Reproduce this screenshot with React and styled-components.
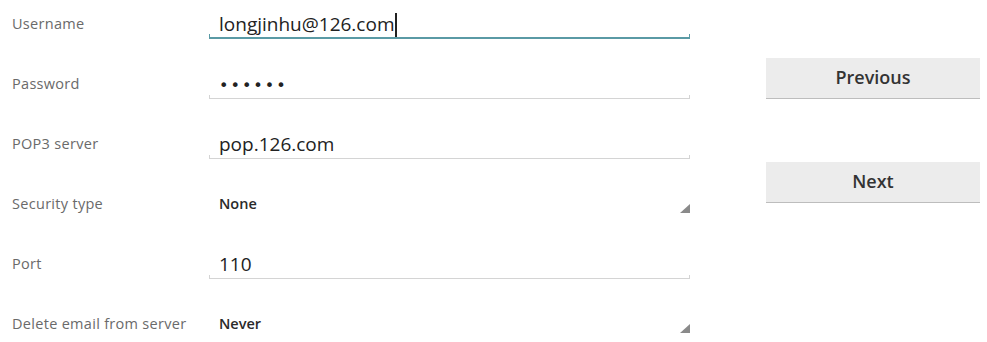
import React from "react";
import styled, { createGlobalStyle } from "styled-components";

const Global = createGlobalStyle`
  html, body { margin: 0; padding: 0; background: #fff; }
  body { font-family: "Open Sans", "Roboto", sans-serif; -webkit-font-smoothing: antialiased; }
`;

const Page = styled.div`
  display: flex;
  width: 987px;
  height: 342px;
  overflow: hidden;
`;

const Form = styled.div`
  display: flex;
  flex-direction: column;
  width: 690px;
  flex-shrink: 0;
`;

const Row = styled.div`
  display: flex;
  align-items: flex-start;
  height: 60px;
  flex-shrink: 0;
`;

const Label = styled.div`
  box-sizing: border-box;
  width: 209px;
  padding-left: 12px;
  line-height: 48px;
  font-size: 14.5px;
  letter-spacing: 0.3px;
  color: #6a6a6a;
  white-space: nowrap;
`;

const Field = styled.div`
  position: relative;
  box-sizing: border-box;
  width: 481px;
  height: 39px;
  padding: 13px 0 0 10px;
  line-height: 22px;
  font-size: 19px;
  color: #222;
  white-space: nowrap;
  border-bottom: ${(p) => (p.$focused ? "2px solid #5a9aa5" : "1px solid #d4d4d4")};
  &::before, &::after {
    content: "";
    position: absolute;
    bottom: 0;
    width: 1px;
    height: 3px;
    background: ${(p) => (p.$focused ? "#5a9aa5" : "#d4d4d4")};
  }
  &::before { left: 0; }
  &::after { right: 0; }
`;

const Dots = styled.span`
  letter-spacing: 2px;
  font-size: 16px;
  font-family: "DejaVu Sans", sans-serif;
`;

const Caret = styled.span`
  display: inline-block;
  width: 1.5px;
  height: 24px;
  background: #222;
  vertical-align: -6px;
  margin-left: 1px;
`;

const Spinner = styled.div`
  position: relative;
  box-sizing: border-box;
  width: 481px;
  height: 39px;
  padding: 14px 0 0 10px;
  line-height: 20px;
  font-size: 14.5px;
  font-weight: 600;
  color: #2a2a2a;
`;

const Triangle = styled.svg`
  position: absolute;
  right: 0;
  bottom: 6px;
`;

const Side = styled.div`
  display: flex;
  flex-direction: column;
  gap: 63px;
  padding: 58px 0 0 76px;
`;

const Button = styled.div`
  box-sizing: border-box;
  width: 214px;
  height: 41px;
  background: #ececec;
  border-bottom: 1px solid #bdbdbd;
  display: flex;
  align-items: center;
  justify-content: center;
  padding-bottom: 3px;
  font-size: 18px;
  font-weight: 600;
  color: #333;
`;

const rows = [
  { label: "Username", type: "text", value: "longjinhu@126.com", focused: true },
  { label: "Password", type: "password", value: "••••••" },
  { label: "POP3 server", type: "text", value: "pop.126.com" },
  { label: "Security type", type: "spinner", value: "None" },
  { label: "Port", type: "text", value: "110" },
  { label: "Delete email from server", type: "spinner", value: "Never" },
];

export default function App() {
  return (
    <>
      <Global />
      <Page>
        <Form>
          {rows.map((r) => (
            <Row key={r.label}>
              <Label>{r.label}</Label>
              {r.type === "spinner" ? (
                <Spinner>
                  {r.value}
                  <Triangle width="10" height="9" viewBox="0 0 10 9">
                    <polygon points="10,0 10,9 0,9" fill="#8a8a8a" />
                  </Triangle>
                </Spinner>
              ) : (
                <Field $focused={r.focused}>
                  {r.type === "password" ? <Dots>{r.value}</Dots> : r.value}
                  {r.focused && <Caret />}
                </Field>
              )}
            </Row>
          ))}
        </Form>
        <Side>
          <Button>Previous</Button>
          <Button>Next</Button>
        </Side>
      </Page>
    </>
  );
}
